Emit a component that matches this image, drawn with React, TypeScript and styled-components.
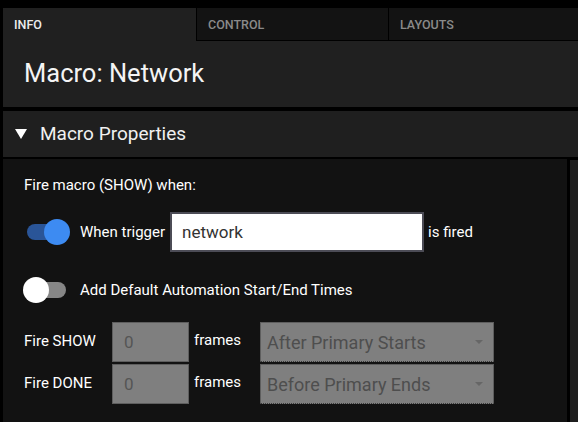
import React from "react";
import styled, { createGlobalStyle } from "styled-components";

const Global = createGlobalStyle`
  html, body { margin: 0; padding: 0; background: #000; }
  body { font-family: Roboto, "Noto Sans", "Liberation Sans", sans-serif; }
  * { box-sizing: border-box; }
`;

const Page = styled.div`
  width: 578px;
  height: 422px;
  overflow: hidden;
  background: #000;
  padding: 8px 0 0 3px;
  display: flex;
  flex-direction: column;
`;

const Tabs = styled.div`
  display: flex;
  gap: 1px;
  height: 33px;
  flex: none;
`;

const Tab = styled.div<{ $active?: boolean; $w?: number }>`
  ${(p) => (p.$w ? `width: ${p.$w}px; flex: none;` : "flex: 1;")}
  background: ${(p) => (p.$active ? "#202020" : "#131313")};
  border-bottom: ${(p) => (p.$active ? "none" : "1px solid #000")};
  color: ${(p) => (p.$active ? "#ececec" : "#8a8a8a")};
  font-size: 12.5px;
  font-weight: 500;
  text-transform: uppercase;
  display: flex;
  align-items: center;
  padding: 0 0 0 11px;
`;

const Header = styled.div`
  height: 66px;
  flex: none;
  background: #202020;
  color: #f4f4f4;
  font-size: 25.5px;
  display: flex;
  align-items: center;
  padding-left: 21px;
  padding-bottom: 2px;
`;

const SectionHeader = styled.div`
  margin-top: 4px;
  height: 46px;
  flex: none;
  background: #1f1f1f;
  color: #f0f0f0;
  font-size: 19px;
  display: flex;
  align-items: center;
  gap: 13px;
  padding-left: 12px;
  padding-bottom: 1px;
`;

const Caret = styled.svg`
  width: 12px;
  height: 10px;
  flex: none;
`;

const Body = styled.div`
  margin-top: 2px;
  flex: 1;
  display: flex;
  gap: 3px;
  min-height: 0;
`;

const Main = styled.div`
  width: 564px;
  flex: none;
  background: #121212;
  padding: 18px 0 0 21px;
  color: #fff;
  font-size: 15px;
`;

const SidePanel = styled.div`
  flex: 1;
  background: #1e1e1e;
  margin-top: 1px;
`;

const Caption = styled.div`
  line-height: 16px;
  height: 16px;
`;

const Row = styled.div<{ $mt: number }>`
  display: flex;
  align-items: center;
  margin-top: ${(p) => p.$mt}px;
`;

const SwitchBox = styled.div`
  position: relative;
  width: 44px;
  height: 24px;
  flex: none;
  margin-right: 12px;
`;

const Track = styled.div<{ $on?: boolean }>`
  position: absolute;
  left: 3px;
  top: 4px;
  width: 39px;
  height: 16px;
  border-radius: 8px;
  background: ${(p) => (p.$on ? "#2a5598" : "#868686")};
`;

const Knob = styled.div<{ $on?: boolean }>`
  position: absolute;
  top: -1px;
  left: ${(p) => (p.$on ? "20px" : "-1px")};
  width: 26px;
  height: 26px;
  border-radius: 50%;
  background: ${(p) => (p.$on ? "#3d8bf2" : "#ffffff")};
`;

const Label = styled.span`
  white-space: nowrap;
`;

const TextField = styled.div`
  width: 254px;
  height: 40px;
  margin: 0 4px 0 5px;
  background: #fff;
  border: 2px solid #4c4c56;
  color: #333;
  font-size: 17px;
  display: flex;
  align-items: center;
  padding-left: 10px;
`;

const Grid = styled.div`
  margin-top: 20px;
  display: grid;
  grid-template-columns: 88px 77px 71px 234px;
  grid-auto-rows: 40px;
  row-gap: 2px;
  align-items: center;
`;

const GridLabel = styled.span`
  white-space: nowrap;
  padding-bottom: 2px;
`;

const FramesLabel = styled.span`
  padding-left: 5px;
  padding-bottom: 4px;
  white-space: nowrap;
`;

const NumBox = styled.div`
  height: 40px;
  background: #7f7f7f;
  border: 1px solid #5e5e5e;
  color: #555;
  font-size: 17px;
  display: flex;
  align-items: center;
  padding-left: 11px;
`;

const SelectBox = styled.div`
  position: relative;
  height: 40px;
  background: #7f7f7f;
  border: 1px solid #5e5e5e;
  border-bottom: 1px dotted #3a3a3a;
  color: #4e4e4e;
  font-size: 18px;
  display: flex;
  align-items: center;
  justify-content: space-between;
  padding: 0 10px 0 6px;
`;

const Arrow = styled.svg`
  width: 8px;
  height: 4px;
  flex: none;
`;

function Switch({ on }: { on?: boolean }) {
  return (
    <SwitchBox>
      <Track $on={on} />
      <Knob $on={on} />
    </SwitchBox>
  );
}

function Select({ value }: { value: string }) {
  return (
    <SelectBox>
      <span>{value}</span>
      <Arrow viewBox="0 0 8 4">
        <path d="M0 0 L8 0 L4 4 Z" fill="#666" />
      </Arrow>
    </SelectBox>
  );
}

export default function App() {
  return (
    <>
      <Global />
      <Page>
        <Tabs>
          <Tab $active $w={193}>INFO</Tab>
          <Tab $w={191}>CONTROL</Tab>
          <Tab>LAYOUTS</Tab>
        </Tabs>
        <Header>Macro: Network</Header>
        <SectionHeader>
          <Caret viewBox="0 0 12 10">
            <path d="M0 0 L12 0 L6 10 Z" fill="#fff" />
          </Caret>
          <span>Macro Properties</span>
        </SectionHeader>
        <Body>
          <Main>
            <Caption>Fire macro (SHOW) when:</Caption>
            <Row $mt={19}>
              <Switch on />
              <Label>When trigger</Label>
              <TextField>network</TextField>
              <Label>is fired</Label>
            </Row>
            <Row $mt={26}>
              <Switch />
              <Label>Add Default Automation Start/End Times</Label>
            </Row>
            <Grid>
              <GridLabel>Fire SHOW</GridLabel>
              <NumBox>0</NumBox>
              <FramesLabel>frames</FramesLabel>
              <Select value="After Primary Starts" />
              <GridLabel>Fire DONE</GridLabel>
              <NumBox>0</NumBox>
              <FramesLabel>frames</FramesLabel>
              <Select value="Before Primary Ends" />
            </Grid>
          </Main>
          <SidePanel />
        </Body>
      </Page>
    </>
  );
}
